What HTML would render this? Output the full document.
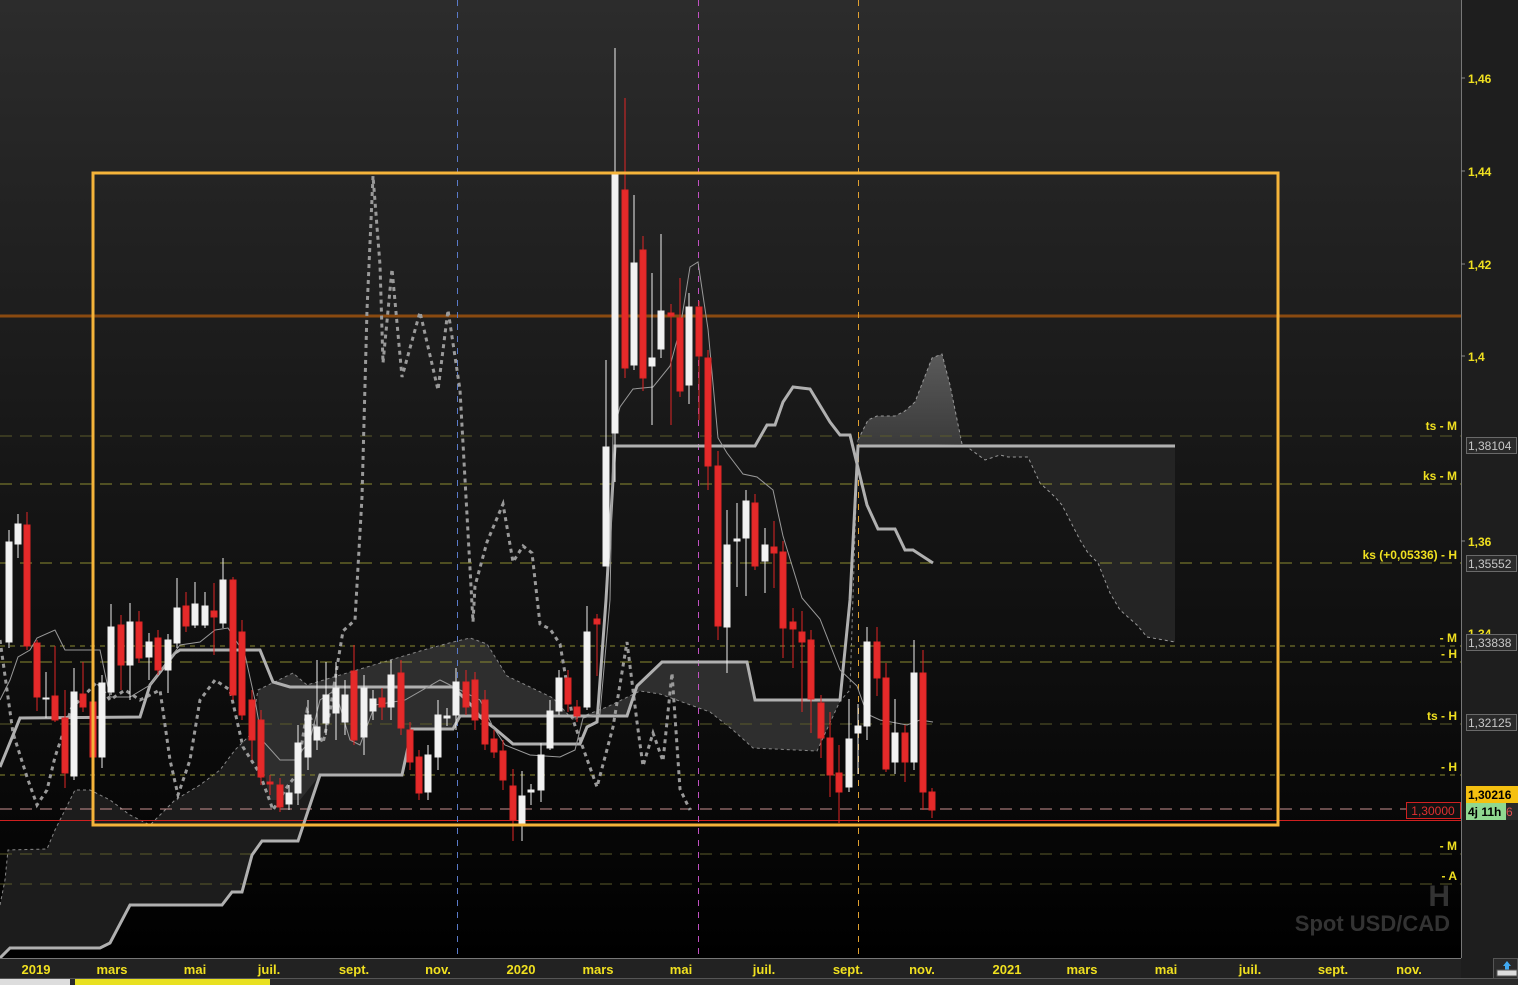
<!DOCTYPE html>
<html><head><meta charset="utf-8"><style>
html,body{margin:0;padding:0;background:#000;}
body{width:1518px;height:985px;overflow:hidden;font-family:"Liberation Sans",Arial,sans-serif;}
</style></head><body>
<svg width="1518" height="985" viewBox="0 0 1518 985" xmlns="http://www.w3.org/2000/svg" style="display:block">
<defs>
<linearGradient id="bg" x1="0" y1="0" x2="0" y2="1">
<stop offset="0" stop-color="#2c2c2c"/><stop offset="0.45" stop-color="#181818"/><stop offset="0.8" stop-color="#0a0a0a"/><stop offset="1" stop-color="#000"/>
</linearGradient>
<linearGradient id="cf" x1="0" y1="0" x2="0" y2="1"><stop offset="0" stop-color="#5a5a5a"/><stop offset="1" stop-color="#3a3a3a"/></linearGradient>
</defs>
<rect x="0" y="0" width="1461" height="958" fill="url(#bg)"/>
<rect x="1461" y="0" width="57" height="985" fill="#1e1e1e"/>
<line x1="1461.5" y1="0" x2="1461.5" y2="958" stroke="#777" stroke-width="1"/>

<polygon fill="#1c1c1c" points="0,905 5,880 8,850 47,849 55,830 75,790 90,790 110,800 130,815 150,825 175,800 200,785 220,770 235,750 250,735 258,690 293,673 307,685 427,649 453,642 470,638 487,644 507,676 553,698 573,720 607,707 640,691 660,694 710,712 733,730 753,748 817,751 840,701 840,700 755,700 747,662 662,662 637,686 627,716 460,716 453,729 412,729 402,775 320,775 300,830 298,841 262,841 252,855 242,892 232,892 222,905 130,905 110,943 100,948 10,948 0,958"/>
<polygon fill="#2e2e2e" points="258,690 293,673 307,685 427,649 453,642 470,638 487,644 507,676 553,698 573,720 607,707 640,691 660,694 710,712 733,730 753,748 817,751 840,701 840,700 755,700 747,662 662,662 637,686 627,716 460,716 453,729 412,729 402,775 320,775 300,800 270,800 262,760"/>
<polyline fill="none" stroke="#888" stroke-width="1" stroke-dasharray="3,3" points="0,905 5,880 8,850 47,849 55,830 75,790 90,790 110,800 130,815 150,825 175,800 200,785 220,770 235,750 250,735 258,690 293,673 307,685 427,649 453,642 470,638 487,644 507,676 553,698 573,720 607,707 640,691 660,694 710,712 733,730 753,748 817,751 840,701 850,690 858,440"/>
<polygon fill="url(#cf)" points="858,440 868,420 877,416 895,416 905,411 915,402 932,358 942,354 950,385 962,444 858,446"/>
<polygon fill="#242424" points="962,444 1175,444 1175,642 1147,637 1137,625 1120,610 1110,593 1098,563 1088,553 1080,540 1062,505 1055,497 1040,483 1028,457 1008,457 1000,455 985,460 970,449"/>
<polyline fill="none" stroke="#999" stroke-width="1" stroke-dasharray="3,3" points="858,440 868,420 877,416 895,416 905,411 915,402 932,358 942,354 950,385 962,444 970,449 985,460 1000,455 1008,457 1028,457 1040,483 1055,497 1062,505 1080,540 1088,553 1098,563 1110,593 1120,610 1137,625 1147,637 1175,642"/>

<g stroke-width="1" fill="none">
<line x1="0" y1="436" x2="1461" y2="436" stroke="#5a5a2a" stroke-dasharray="12,8"/>
<line x1="0" y1="484" x2="1461" y2="484" stroke="#8a8a30" stroke-dasharray="12,8"/>
<line x1="0" y1="563" x2="1461" y2="563" stroke="#8a8a30" stroke-dasharray="12,8"/>
<line x1="0" y1="646" x2="1461" y2="646" stroke="#8a8a30" stroke-dasharray="5,5"/>
<line x1="0" y1="662" x2="1461" y2="662" stroke="#8a8a30" stroke-dasharray="12,8"/>
<line x1="0" y1="724" x2="1461" y2="724" stroke="#5a5a2a" stroke-dasharray="12,8"/>
<line x1="0" y1="775" x2="1461" y2="775" stroke="#8a8a30" stroke-dasharray="5,5"/>
<line x1="0" y1="809" x2="1461" y2="809" stroke="#c89090" stroke-dasharray="12,8"/>
<line x1="0" y1="854" x2="1461" y2="854" stroke="#5a5a2a" stroke-dasharray="12,8"/>
<line x1="0" y1="884" x2="1461" y2="884" stroke="#5a5a2a" stroke-dasharray="12,8"/>
<line x1="0" y1="820.5" x2="1461" y2="820.5" stroke="#d02020"/>
<line x1="0" y1="316" x2="1461" y2="316" stroke="#8a4a10" stroke-width="3"/>
<line x1="457.5" y1="0" x2="457.5" y2="958" stroke="#5a7ac8" stroke-dasharray="6,6"/>
<line x1="698.5" y1="0" x2="698.5" y2="958" stroke="#c050c0" stroke-dasharray="6,6"/>
<line x1="858.5" y1="0" x2="858.5" y2="958" stroke="#e0a030" stroke-dasharray="6,6"/>
</g>

<polyline fill="none" stroke="#9a9a9a" stroke-width="3" stroke-dasharray="4,4" points="0,640 13,733 27,777 37,805 47,790 55,757 72,707 80,700 97,682 110,700 125,690 140,700 160,690 170,760 178,795 190,760 200,700 215,680 230,690 243,747 260,774 273,810 287,787 297,774 307,711 323,743 330,711 337,667 343,631 355,620 362,497 367,310 373,176 380,265 383,363 392,269 402,377 420,312 438,390 448,310 460,390 473,622 475,586 487,542 503,504 513,562 523,546 532,553 540,624 550,629 560,644 573,720 597,787 613,727 627,642 637,722 643,766 653,733 663,761 672,673 680,789 690,810"/>

<polyline fill="none" stroke="#b0b0b0" stroke-width="3" points="0,958 10,948 100,948 110,943 130,905 222,905 232,892 242,892 252,855 262,841 298,841 320,775 402,775 412,729 453,729 460,716 627,716 637,686 662,662 747,662 755,700 840,700 850,600 858,446 1175,446"/>
<polyline fill="none" stroke="#b0b0b0" stroke-width="3" points="0,767 20,718 140,717 150,685 175,653 180,650 260,650 273,682 290,687 453,687 473,707 480,717 493,727 513,744 580,744 587,727 597,722 606,600 615,446 755,446 767,425 775,425 783,402 793,387 810,389 830,422 840,435 850,435 867,505 878,529 895,529 905,550 913,550 933,563"/>
<polyline fill="none" stroke="#999" stroke-width="1" points="0,700 10,680 18,657 30,650 37,638 55,630 65,650 100,650 110,697 130,697 150,685 165,665 180,645 200,642 215,630 228,628 245,655 255,700 262,740 280,760 295,760 310,740 320,700 335,690 350,740 360,745 375,705 405,700 440,680 460,690 480,700 493,727 505,745 530,755 560,757 575,750 583,718 600,714 610,600 613,433 620,407 633,389 653,387 670,366 680,329 690,267 698,262 708,329 718,438 727,453 743,474 757,477 773,490 783,536 802,598 820,619 840,670 857,686 867,714 880,720 907,725 920,720 933,722"/>

<g stroke="#eee" fill="#f2f2f2" stroke-width="1">
<line x1="9" y1="530" x2="9" y2="648"/><rect x="6" y="542" width="6" height="100"/>
<line x1="18" y1="514" x2="18" y2="558"/><rect x="15" y="524" width="6" height="20"/>
<line x1="46" y1="672" x2="46" y2="718"/><rect x="43" y="698" width="6" height="1"/>
<line x1="74" y1="668" x2="74" y2="780"/><rect x="71" y="692" width="6" height="84"/>
<line x1="102" y1="675" x2="102" y2="768"/><rect x="99" y="683" width="6" height="74"/>
<line x1="111" y1="604" x2="111" y2="695"/><rect x="108" y="627" width="6" height="65"/>
<line x1="130" y1="603" x2="130" y2="700"/><rect x="127" y="622" width="6" height="43"/>
<line x1="149" y1="633" x2="149" y2="680"/><rect x="146" y="642" width="6" height="15"/>
<line x1="168" y1="634" x2="168" y2="693"/><rect x="165" y="640" width="6" height="30"/>
<line x1="177" y1="578" x2="177" y2="648"/><rect x="174" y="608" width="6" height="35"/>
<line x1="195" y1="582" x2="195" y2="628"/><rect x="192" y="604" width="6" height="21"/>
<line x1="205" y1="592" x2="205" y2="628"/><rect x="202" y="606" width="6" height="19"/>
<line x1="223" y1="558" x2="223" y2="628"/><rect x="220" y="580" width="6" height="43"/>
<line x1="289" y1="785" x2="289" y2="810"/><rect x="286" y="793" width="6" height="11"/>
<line x1="298" y1="725" x2="298" y2="805"/><rect x="295" y="743" width="6" height="50"/>
<line x1="308" y1="700" x2="308" y2="770"/><rect x="305" y="715" width="6" height="42"/>
<line x1="317" y1="660" x2="317" y2="750"/><rect x="314" y="727" width="6" height="13"/>
<line x1="326" y1="662" x2="326" y2="735"/><rect x="323" y="695" width="6" height="28"/>
<line x1="336" y1="662" x2="336" y2="740"/><rect x="333" y="688" width="6" height="25"/>
<line x1="345" y1="680" x2="345" y2="735"/><rect x="342" y="695" width="6" height="27"/>
<line x1="364" y1="675" x2="364" y2="755"/><rect x="361" y="688" width="6" height="49"/>
<line x1="373" y1="690" x2="373" y2="720"/><rect x="370" y="699" width="6" height="12"/>
<line x1="391" y1="660" x2="391" y2="720"/><rect x="388" y="675" width="6" height="32"/>
<line x1="428" y1="745" x2="428" y2="800"/><rect x="425" y="755" width="6" height="37"/>
<line x1="438" y1="700" x2="438" y2="770"/><rect x="435" y="715" width="6" height="42"/>
<line x1="447" y1="708" x2="447" y2="726"/><rect x="444" y="716" width="6" height="2"/>
<line x1="456" y1="668" x2="456" y2="730"/><rect x="453" y="682" width="6" height="33"/>
<line x1="522" y1="771" x2="522" y2="841"/><rect x="519" y="796" width="6" height="29"/>
<line x1="531" y1="784" x2="531" y2="805"/><rect x="528" y="790" width="6" height="2"/>
<line x1="541" y1="743" x2="541" y2="802"/><rect x="538" y="755" width="6" height="35"/>
<line x1="550" y1="700" x2="550" y2="750"/><rect x="547" y="711" width="6" height="37"/>
<line x1="559" y1="670" x2="559" y2="715"/><rect x="556" y="678" width="6" height="33"/>
<line x1="587" y1="606" x2="587" y2="710"/><rect x="584" y="632" width="6" height="75"/>
<line x1="606" y1="360" x2="606" y2="566"/><rect x="603" y="447" width="6" height="119"/>
<line x1="615" y1="48" x2="615" y2="482"/><rect x="612" y="172" width="6" height="261"/>
<line x1="634" y1="195" x2="634" y2="370"/><rect x="631" y="263" width="6" height="102"/>
<line x1="652" y1="273" x2="652" y2="425"/><rect x="649" y="358" width="6" height="8"/>
<line x1="661" y1="234" x2="661" y2="358"/><rect x="658" y="311" width="6" height="38"/>
<line x1="689" y1="293" x2="689" y2="404"/><rect x="686" y="307" width="6" height="78"/>
<line x1="727" y1="510" x2="727" y2="673"/><rect x="724" y="545" width="6" height="82"/>
<line x1="737" y1="503" x2="737" y2="587"/><rect x="734" y="539" width="6" height="2"/>
<line x1="746" y1="490" x2="746" y2="596"/><rect x="743" y="501" width="6" height="37"/>
<line x1="765" y1="528" x2="765" y2="593"/><rect x="762" y="545" width="6" height="16"/>
<line x1="849" y1="699" x2="849" y2="792"/><rect x="846" y="739" width="6" height="48"/>
<line x1="858" y1="704" x2="858" y2="774"/><rect x="855" y="726" width="6" height="7"/>
<line x1="867" y1="627" x2="867" y2="740"/><rect x="864" y="642" width="6" height="84"/>
<line x1="895" y1="699" x2="895" y2="774"/><rect x="892" y="733" width="6" height="29"/>
<line x1="914" y1="640" x2="914" y2="770"/><rect x="911" y="673" width="6" height="89"/>
</g>
<g stroke="#e02525" fill="#e52a2a" stroke-width="1">
<line x1="27" y1="512" x2="27" y2="650"/><rect x="24" y="525" width="6" height="121"/>
<line x1="37" y1="640" x2="37" y2="711"/><rect x="34" y="643" width="6" height="54"/>
<line x1="55" y1="646" x2="55" y2="722"/><rect x="52" y="696" width="6" height="24"/>
<line x1="65" y1="690" x2="65" y2="788"/><rect x="62" y="718" width="6" height="55"/>
<line x1="83" y1="662" x2="83" y2="712"/><rect x="80" y="694" width="6" height="13"/>
<line x1="93" y1="690" x2="93" y2="765"/><rect x="90" y="702" width="6" height="55"/>
<line x1="121" y1="615" x2="121" y2="690"/><rect x="118" y="625" width="6" height="40"/>
<line x1="139" y1="611" x2="139" y2="663"/><rect x="136" y="622" width="6" height="36"/>
<line x1="158" y1="630" x2="158" y2="675"/><rect x="155" y="638" width="6" height="32"/>
<line x1="186" y1="592" x2="186" y2="632"/><rect x="183" y="606" width="6" height="20"/>
<line x1="214" y1="583" x2="214" y2="655"/><rect x="211" y="611" width="6" height="6"/>
<line x1="233" y1="577" x2="233" y2="700"/><rect x="230" y="580" width="6" height="115"/>
<line x1="242" y1="620" x2="242" y2="720"/><rect x="239" y="632" width="6" height="83"/>
<line x1="252" y1="690" x2="252" y2="760"/><rect x="249" y="700" width="6" height="40"/>
<line x1="261" y1="710" x2="261" y2="785"/><rect x="258" y="720" width="6" height="57"/>
<line x1="270" y1="775" x2="270" y2="795"/><rect x="267" y="782" width="6" height="2"/>
<line x1="280" y1="778" x2="280" y2="812"/><rect x="277" y="785" width="6" height="22"/>
<line x1="354" y1="645" x2="354" y2="745"/><rect x="351" y="671" width="6" height="69"/>
<line x1="382" y1="688" x2="382" y2="720"/><rect x="379" y="698" width="6" height="9"/>
<line x1="401" y1="660" x2="401" y2="735"/><rect x="398" y="673" width="6" height="55"/>
<line x1="410" y1="722" x2="410" y2="770"/><rect x="407" y="730" width="6" height="32"/>
<line x1="419" y1="750" x2="419" y2="800"/><rect x="416" y="757" width="6" height="36"/>
<line x1="466" y1="670" x2="466" y2="715"/><rect x="463" y="682" width="6" height="25"/>
<line x1="475" y1="672" x2="475" y2="730"/><rect x="472" y="680" width="6" height="40"/>
<line x1="485" y1="690" x2="485" y2="750"/><rect x="482" y="700" width="6" height="44"/>
<line x1="494" y1="730" x2="494" y2="758"/><rect x="491" y="739" width="6" height="13"/>
<line x1="503" y1="740" x2="503" y2="790"/><rect x="500" y="751" width="6" height="29"/>
<line x1="513" y1="769" x2="513" y2="841"/><rect x="510" y="786" width="6" height="34"/>
<line x1="568" y1="670" x2="568" y2="712"/><rect x="565" y="678" width="6" height="26"/>
<line x1="577" y1="700" x2="577" y2="722"/><rect x="574" y="707" width="6" height="9"/>
<line x1="597" y1="614" x2="597" y2="676"/><rect x="594" y="619" width="6" height="5"/>
<line x1="625" y1="98" x2="625" y2="378"/><rect x="622" y="190" width="6" height="178"/>
<line x1="643" y1="236" x2="643" y2="391"/><rect x="640" y="250" width="6" height="128"/>
<line x1="671" y1="304" x2="671" y2="425"/><rect x="668" y="313" width="6" height="3"/>
<line x1="680" y1="278" x2="680" y2="397"/><rect x="677" y="318" width="6" height="73"/>
<line x1="699" y1="301" x2="699" y2="420"/><rect x="696" y="307" width="6" height="49"/>
<line x1="708" y1="350" x2="708" y2="490"/><rect x="705" y="358" width="6" height="108"/>
<line x1="718" y1="451" x2="718" y2="640"/><rect x="715" y="466" width="6" height="160"/>
<line x1="755" y1="494" x2="755" y2="570"/><rect x="752" y="503" width="6" height="63"/>
<line x1="774" y1="521" x2="774" y2="588"/><rect x="771" y="547" width="6" height="6"/>
<line x1="783" y1="541" x2="783" y2="658"/><rect x="780" y="552" width="6" height="76"/>
<line x1="793" y1="608" x2="793" y2="668"/><rect x="790" y="622" width="6" height="7"/>
<line x1="802" y1="611" x2="802" y2="712"/><rect x="799" y="632" width="6" height="10"/>
<line x1="811" y1="630" x2="811" y2="733"/><rect x="808" y="640" width="6" height="59"/>
<line x1="821" y1="695" x2="821" y2="758"/><rect x="818" y="703" width="6" height="35"/>
<line x1="830" y1="712" x2="830" y2="797"/><rect x="827" y="738" width="6" height="37"/>
<line x1="839" y1="745" x2="839" y2="823"/><rect x="836" y="773" width="6" height="19"/>
<line x1="877" y1="627" x2="877" y2="696"/><rect x="874" y="642" width="6" height="36"/>
<line x1="886" y1="663" x2="886" y2="772"/><rect x="883" y="678" width="6" height="91"/>
<line x1="905" y1="725" x2="905" y2="782"/><rect x="902" y="733" width="6" height="29"/>
<line x1="923" y1="650" x2="923" y2="810"/><rect x="920" y="673" width="6" height="119"/>
<line x1="932" y1="788" x2="932" y2="818"/><rect x="929" y="792" width="6" height="18"/>
</g>

<rect x="93" y="173" width="1185" height="652" fill="none" stroke="#f5b43a" stroke-width="3"/>

<text x="1450" y="906" text-anchor="end" font-size="30" font-weight="bold" fill="#333">H</text>
<text x="1450" y="931" text-anchor="end" font-size="22" font-weight="bold" fill="#333">Spot USD/CAD</text>

<g font-size="12" font-weight="bold" fill="#f0e020" text-anchor="end">
<text x="1457" y="430">ts - M</text>
<text x="1457" y="480">ks - M</text>
<text x="1457" y="559">ks (+0,05336) - H</text>
<text x="1457" y="642">- M</text>
<text x="1457" y="658">- H</text>
<text x="1457" y="720">ts - H</text>
<text x="1457" y="771">- H</text>
<text x="1457" y="850">- M</text>
<text x="1457" y="880">- A</text>
</g>
<rect x="1406.5" y="802.5" width="54" height="16" fill="#111" stroke="#d02020"/>
<text x="1433" y="815" text-anchor="middle" font-size="12" fill="#e03030">1,30000</text>

<g stroke="#888"><line x1="1461" y1="78" x2="1465" y2="78"/><line x1="1461" y1="171" x2="1465" y2="171"/><line x1="1461" y1="264" x2="1465" y2="264"/><line x1="1461" y1="356" x2="1465" y2="356"/><line x1="1461" y1="541" x2="1465" y2="541"/></g>
<g font-size="12" font-weight="bold" fill="#f0e020">
<text x="1468" y="83">1,46</text><text x="1468" y="176">1,44</text><text x="1468" y="269">1,42</text><text x="1468" y="361">1,4</text><text x="1468" y="546">1,36</text><text x="1468" y="638">1,34</text>
</g>
<g font-size="12" fill="#c8c8c8">
<rect x="1466.5" y="437.5" width="50" height="16" fill="#2a2a2a" stroke="#6a6a6a"/><text x="1468" y="450">1,38104</text>
<rect x="1466.5" y="555.5" width="50" height="16" fill="#2a2a2a" stroke="#6a6a6a"/><text x="1468" y="568">1,35552</text>
<rect x="1466.5" y="634.5" width="50" height="16" fill="#2a2a2a" stroke="#6a6a6a"/><text x="1468" y="647">1,33838</text>
<rect x="1466.5" y="714.5" width="50" height="16" fill="#2a2a2a" stroke="#6a6a6a"/><text x="1468" y="727">1,32125</text>
</g>
<rect x="1466" y="786" width="52" height="17" fill="#f5c010"/>
<text x="1468" y="799" font-size="12" font-weight="bold" fill="#000">1,30216</text>
<rect x="1466" y="803" width="52" height="17" fill="#2a2a2a"/>
<text x="1506" y="816" font-size="12" fill="#e05050">6</text>
<rect x="1466" y="803" width="40" height="17" fill="#90d890"/>
<text x="1468" y="816" font-size="12" font-weight="bold" fill="#000">4j 11h</text>

<rect x="0" y="958" width="1461" height="20" fill="#222"/>
<line x1="0" y1="958.5" x2="1461" y2="958.5" stroke="#777"/>
<line x1="0" y1="978.5" x2="1518" y2="978.5" stroke="#555"/>
<rect x="0" y="979" width="1518" height="6" fill="#2a2a2a"/>
<rect x="75" y="979" width="195" height="6" fill="#e8e020"/>
<rect x="0" y="979" width="70" height="6" fill="#ddd"/>
<g font-size="13" font-weight="bold" fill="#f0e020" text-anchor="middle">
<text x="36" y="974">2019</text><text x="112" y="974">mars</text><text x="195" y="974">mai</text><text x="269" y="974">juil.</text><text x="354" y="974">sept.</text><text x="438" y="974">nov.</text><text x="521" y="974">2020</text><text x="598" y="974">mars</text><text x="681" y="974">mai</text><text x="764" y="974">juil.</text><text x="848" y="974">sept.</text><text x="922" y="974">nov.</text><text x="1007" y="974">2021</text><text x="1082" y="974">mars</text><text x="1166" y="974">mai</text><text x="1250" y="974">juil.</text><text x="1333" y="974">sept.</text><text x="1409" y="974">nov.</text>
</g>
<rect x="1493.5" y="958.5" width="24" height="20" fill="#2a2a2a" stroke="#555"/>
<path d="M1507 961 L1511 966 L1509 966 L1509 970 L1505 970 L1505 966 L1503 966 Z" fill="#40a8f0"/>
<rect x="1497" y="970" width="20" height="6" fill="#ddd" stroke="#555"/>
</svg>
</body></html>
